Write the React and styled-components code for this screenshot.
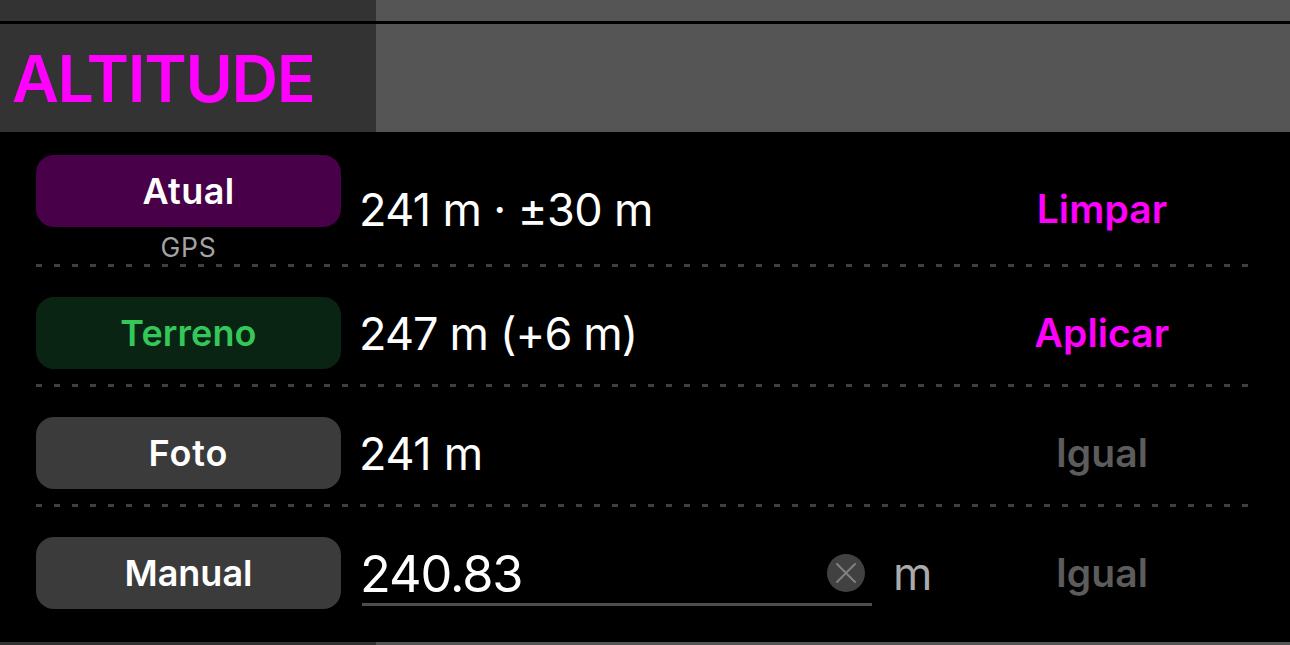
import React from "react"
import styled, { createGlobalStyle } from "styled-components"

const rows = [
  { label: "Atual", tone: "current", source: "GPS", value: "241 m · ±30 m", tracking: 0.4, spacing: -0.6, action: "Limpar" },
  { label: "Terreno", tone: "terrain", value: "247 m (+6 m)", tracking: 0.1, spacing: -0.85, action: "Aplicar" },
  { label: "Foto", tone: "plain", value: "241 m", tracking: 0.9, spacing: -0.3, action: "Igual", disabled: true },
]

const App = () => {
  return (
    <>
      <GlobalStyle />
      <Screen>
        <Strip />
        <Header>
          <Title>ALTITUDE</Title>
        </Header>
        <Panel>
          {rows.map(row => (
            <Row key={row.label} $tall={!!row.source}>
              <Source>
                <Tag $tone={row.tone} $tracking={row.tracking}>
                  {row.label}
                </Tag>
                {row.source && <Caption>{row.source}</Caption>}
              </Source>
              <Value $spacing={row.spacing} $tall={!!row.source}>
                {row.value}
              </Value>
              <Action disabled={row.disabled} $tall={!!row.source}>
                {row.action}
              </Action>
              <Dashes viewBox="0 0 1212 3">
                <path d="M0 1.5H1212" stroke="#404040" strokeWidth="3" strokeDasharray="6 12" />
              </Dashes>
            </Row>
          ))}
          <Row>
            <Source>
              <Tag $tone="plain" $tracking={0}>
                Manual
              </Tag>
            </Source>
            <Field>
              <Input>240.83</Input>
              <Clear viewBox="0 0 38 38">
                <circle cx="19" cy="19" r="19" fill="#414141" />
                <path d="M10 10L28 28M28 10L10 28" stroke="#808080" strokeWidth="2" strokeLinecap="round" />
              </Clear>
            </Field>
            <Unit>m</Unit>
            <Action disabled>Igual</Action>
          </Row>
        </Panel>
        <Strip $bottom />
      </Screen>
    </>
  )
}

export default App

const tones = {
  current: { background: "#480048", color: "#fff" },
  terrain: { background: "#0a2413", color: "#34c759" },
  plain: { background: "#3b3b3b", color: "#fff" },
}

const GlobalStyle = createGlobalStyle`
  * {
    box-sizing: border-box;
  }

  body {
    margin: 0;
    background: #000;
    overflow: hidden;
  }
`

const Screen = styled.main`
  width: 1290px;
  height: 645px;
  display: flex;
  flex-direction: column;
  background: #000;
  color: #fff;
  font-family: Inter, sans-serif;
  white-space: nowrap;
`

const Strip = styled.div`
  height: ${props => (props.$bottom ? "3px" : "21px")};
  margin-bottom: ${props => (props.$bottom ? 0 : "3px")};
  background: linear-gradient(90deg, #333 376px, #555 376px);
`

const Header = styled.header`
  height: 108px;
  padding: 1px 0 0 12px;
  display: flex;
  align-items: center;
  background: linear-gradient(90deg, #333 376px, #555 376px);
`

const Title = styled.h1`
  margin: 0;
  color: #f0f;
  font-size: 64.5px;
  font-weight: 560;
  letter-spacing: -1.4px;
`

const Panel = styled.section`
  height: 510px;
  padding: 0 42px 0 36px;
`

const Row = styled.div`
  position: relative;
  display: flex;
  align-items: center;
  height: ${props => (props.$tall ? "135px" : "120px")};
  padding: ${props => (props.$tall ? "23px 0 2px" : "30px 0 18px")};
`

const Source = styled.div`
  width: 305px;
  margin-right: 19px;
`

const Tag = styled.div`
  height: 72px;
  display: flex;
  align-items: center;
  justify-content: center;
  border-radius: 18px;
  background: ${props => tones[props.$tone].background};
  color: ${props => tones[props.$tone].color};
  font-size: 36px;
  font-weight: 560;
  letter-spacing: ${props => props.$tracking}px;
`

const Caption = styled.div`
  height: 38px;
  padding-top: 4px;
  color: #a3a3a3;
  font-size: 26.5px;
  line-height: 32px;
  letter-spacing: 0.7px;
  text-align: center;
`

const Value = styled.div`
  flex: 1;
  margin-left: -1px;
  padding-top: ${props => (props.$tall ? 0 : "2px")};
  font-size: 45px;
  line-height: 54px;
  letter-spacing: ${props => props.$spacing}px;
`

const Action = styled.button`
  width: 292px;
  padding: 0 0 ${props => (props.$tall ? "2px" : 0)};
  border: 0;
  background: none;
  color: ${props => (props.disabled ? "#5c5c5c" : "#f0f")};
  font: 560 39px/48px Inter, sans-serif;
  letter-spacing: 0.1px;
`

const Dashes = styled.svg`
  position: absolute;
  left: 0;
  bottom: 0;
  width: 1212px;
  height: 3px;
`

const Field = styled.div`
  width: 510px;
  height: 66px;
  margin-left: 2px;
  display: flex;
  align-items: center;
  justify-content: space-between;
  border-bottom: 3px solid #4d4d4d;
  padding: 3px 7px 0 0;
`

const Input = styled.div`
  margin-left: -2px;
  padding-top: 1px;
  font-size: 50.5px;
  letter-spacing: -1.1px;
`

const Clear = styled.svg`
  width: 38px;
  height: 38px;
  fill: none;
`

const Unit = styled.div`
  flex: 1;
  padding-left: 21px;
  color: #aaa;
  font-size: 45px;
`
